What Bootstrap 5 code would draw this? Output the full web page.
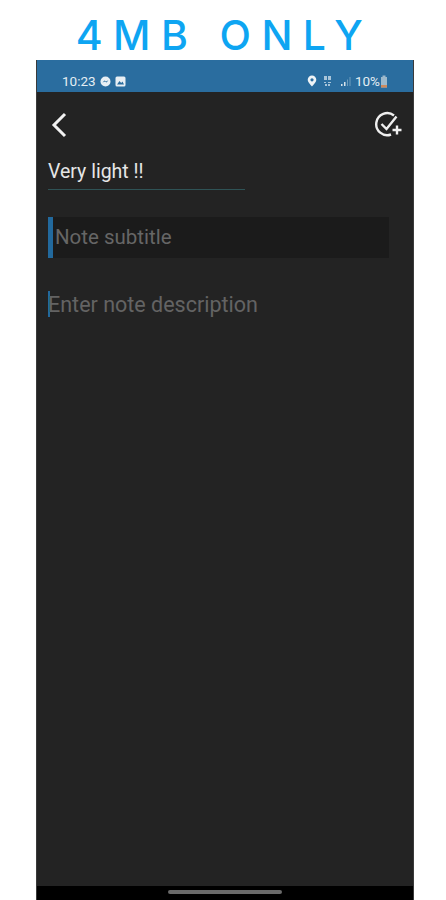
<!DOCTYPE html>
<html lang="en">
<head>
    <meta charset="UTF-8">
    <meta name="viewport" content="width=device-width, initial-scale=1.0">
    <title>4MB Only</title>
    <link href="https://cdn.jsdelivr.net/npm/bootstrap@5.3.0/dist/css/bootstrap.min.css" rel="stylesheet">
    <style>
        html, body {
            height: 900px;
            overflow: hidden;
            background: #fff;
        }
        body {
            font-family: Roboto, "Liberation Sans", sans-serif;
        }
        .promo-title {
            height: 60px;
            padding-top: 13px;
            padding-left: 3px;
            font-family: Inter, "Liberation Sans", sans-serif;
            font-size: 41px;
            line-height: 44px;
            font-weight: 500;
            letter-spacing: 10.4px;
            color: #0ea5f2;
            white-space: nowrap;
        }
        .phone {
            width: 378px;
            height: 840px;
            margin-left: 36px;
            background: #232323;
            border-left: 1px solid #3a3a3a;
            border-right: 1px solid #3a3a3a;
        }
        .status-bar {
            height: 32px;
            padding: 10px 25px 0 25px;
            background: #2a6d9f;
            color: #e4edf3;
            font-size: 13.5px;
            line-height: 22px;
        }
        .app-bar {
            height: 62px;
            padding: 4px 9px 0 13px;
        }
        .note-title {
            width: 197px;
            height: 36px;
            margin-left: 11px;
            border-bottom: 1px solid #2f5356;
            color: #e6e6e6;
            font-size: 19.5px;
            line-height: 36px;
        }
        .note-subtitle {
            width: 341px;
            height: 41px;
            margin: 27px 0 0 11px;
            padding-left: 2px;
            background: #1b1b1b;
            border-left: 5px solid #22699d;
            color: #666;
            font-size: 20.5px;
            line-height: 41px;
        }
        .note-body {
            margin: 33px 0 0 11px;
            height: 26px;
            border-left: 2px solid #22699d;
            color: #636363;
            font-size: 21.5px;
            line-height: 27px;
        }
        .note-body span {
            margin-left: -2px;
        }
        .nav-strip {
            height: 14px;
            background: #000;
        }
        .nav-handle {
            width: 114px;
            height: 4px;
            margin-top: 4px;
            border-radius: 2px;
            background: #6a6a6a;
        }
        .pin-gap {
            margin-right: 6px;
        }
    </style>
</head>
<body>
<div class="promo-title text-center">4MB ONLY</div>

<div class="phone d-flex flex-column">
    <div class="status-bar d-flex justify-content-between">
        <div class="d-flex align-items-center gap-1">
            <span>10:23</span>
            <svg width="11" height="11" viewBox="0 0 11 11"><circle cx="5.5" cy="5.5" r="5" fill="#e8eff4"/><path d="M2.5 6.5 4.5 4.6 6 5.6 8.5 4.2 6.5 6.4 5 5.4Z" fill="#2a6d9f"/></svg>
            <svg width="11" height="11" viewBox="0 0 11 11"><rect x=".5" y=".5" width="10" height="10" rx="1.5" fill="#e8eff4"/><path d="M2 8.5 4.5 5l1.7 2L7.500 5.500 9 8.500Z" fill="#2a6d9f"/></svg>
        </div>
        <div class="d-flex align-items-center">
            <svg class="pin-gap" width="10" height="12" viewBox="0 0 10 12"><path d="M5 .5a4.3 4.3 0 0 1 4.3 4.3C9.300 7.500 5 11.500 5 11.500S.7 7.500.7 4.800A4.300 4.300 0 0 1 5 .5Z" fill="#eef3f6"/><circle cx="5" cy="4.800" r="1.600" fill="#2a6d9f"/></svg>
            <svg class="me-2" width="9" height="12" viewBox="0 0 9 12"><path d="M1 1h3v4H1ZM5 1h3v4H5ZM1 7h2v1H1ZM5 7h3v1H5ZM2 9h2v2H2ZM5 9h2v2H5Z" fill="#a9c5d9"/></svg>
            <svg class="me-1" width="11" height="11" viewBox="0 0 11 11"><path d="M1 8h1.500v2H1ZM4 6h1.500v4H4Z" fill="#d7e3eb"/><path d="M7 3.500h1v6.500H7ZM9.500 1h1v9h-1Z" fill="#6f9dbd"/></svg>
            <span>10%</span>
            <svg width="8" height="13" viewBox="0 0 8 13"><path d="M2.500.5h3V2H7v10.500H1V2h1.500Z" fill="#9db9cc"/><rect x="1" y="10" width="6" height="2.500" fill="#d08a5c"/></svg>
        </div>
    </div>

    <div class="app-bar d-flex justify-content-between align-items-center">
        <svg width="18" height="26" viewBox="0 0 18 26" fill="none"><path d="M15 2 4 13l11 11" stroke="#f2f2f2" stroke-width="3"/></svg>
        <svg width="30" height="28" viewBox="0 0 30 28" fill="none" stroke="#efefef" stroke-width="2.400">
            <path d="M20 4.500A11 11 0 1 0 17 23.500"/>
            <path d="M7.500 13l5 5 10-12.500"/>
            <path d="M23 14.500v9M18.500 19h9"/>
        </svg>
    </div>

    <div class="note-title">Very light !!</div>
    <div class="note-subtitle">Note subtitle</div>
    <div class="note-body"><span>Enter note description</span></div>

    <div class="nav-strip mt-auto d-flex justify-content-center">
        <div class="nav-handle"></div>
    </div>
</div>

<script src="https://cdn.jsdelivr.net/npm/bootstrap@5.3.0/dist/js/bootstrap.bundle.min.js"></script>
</body>
</html>
